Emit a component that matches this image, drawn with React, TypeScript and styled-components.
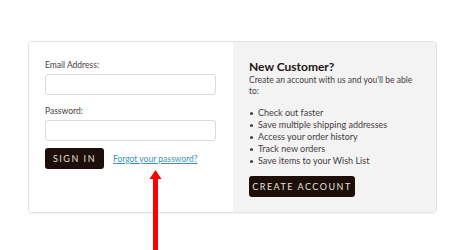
import React from 'react'
import styled, { createGlobalStyle } from 'styled-components'

const Global = createGlobalStyle`
  html, body {
    margin: 0;
    background: #fff;
    font-family: Lato, "Liberation Sans", sans-serif;
    color: #463c40;
  }
`

const Page = styled.div`
  position: relative;
  height: 250px;
  padding: 41px 0 0 28px;
  box-sizing: border-box;
  overflow: hidden;
`

const Card = styled.div`
  width: 409px;
  height: 172px;
  display: flex;
  border: 1px solid #e2e2e2;
  border-radius: 4px;
  box-sizing: border-box;
  overflow: hidden;
  box-shadow: 0 1px 2px rgba(0, 0, 0, 0.05);
`

const LoginPane = styled.div`
  width: 204px;
  flex-shrink: 0;
  box-sizing: border-box;
  background: #fff;
  padding: 17px 16px 0 16px;
  display: flex;
  flex-direction: column;
`

const Label = styled.label`
  font-size: 8.5px;
  line-height: 12px;
  margin-bottom: 3px;
`

const Input = styled.input`
  height: 21px;
  width: 171px;
  border: 1px solid #dadada;
  border-radius: 3px;
  box-sizing: border-box;
  margin-bottom: ${(p: { last?: boolean }) => (p.last ? '7px' : '10px')};
`

const ActionRow = styled.div`
  display: flex;
  align-items: center;
  gap: 9px;
`

const DarkButton = styled.button`
  height: 21px;
  width: ${(p: { w: number }) => p.w}px;
  background: #1d0e09;
  color: #e6e1de;
  border: none;
  border-radius: 3px;
  font-family: Lato, "Liberation Sans", sans-serif;
  font-size: 9px;
  font-weight: 400;
  letter-spacing: 1.5px;
  padding: 0;
`

const Link = styled.a`
  font-size: 8.5px;
  color: #3a93b8;
  text-decoration: underline;
`

const InfoPane = styled.div`
  flex: 1;
  min-width: 0;
  background: #f3f3f3;
  padding: 18px 16px 0 16px;
  display: flex;
  flex-direction: column;
  align-items: flex-start;
`

const Title = styled.div`
  font-size: 12px;
  font-weight: 700;
  line-height: 14px;
  color: #1f1416;
`

const Para = styled.p`
  margin: 1px 0 10px;
  font-size: 8.5px;
  line-height: 11px;
  width: 165px;
`

const List = styled.ul`
  margin: 0 0 9px;
  padding: 0;
  list-style: none;
`

const Item = styled.li`
  font-size: 9px;
  line-height: 12px;
  display: flex;
  align-items: center;
  &::before {
    content: '';
    width: 3px;
    height: 3px;
    border-radius: 50%;
    background: #463c40;
    margin: 0 5px 0 1px;
  }
`

const Arrow = styled.svg`
  position: absolute;
  left: 149px;
  top: 170px;
`

export default function App() {
  return (
    <Page>
      <Global />
      <Card>
        <LoginPane>
          <Label>Email Address:</Label>
          <Input />
          <Label>Password:</Label>
          <Input type="password" last />
          <ActionRow>
            <DarkButton w={59}>SIGN IN</DarkButton>
            <Link href="#">Forgot your password?</Link>
          </ActionRow>
        </LoginPane>
        <InfoPane>
          <Title>New Customer?</Title>
          <Para>Create an account with us and you'll be able to:</Para>
          <List>
            <Item>Check out faster</Item>
            <Item>Save multiple shipping addresses</Item>
            <Item>Access your order history</Item>
            <Item>Track new orders</Item>
            <Item>Save items to your Wish List</Item>
          </List>
          <DarkButton w={106}>CREATE ACCOUNT</DarkButton>
        </InfoPane>
      </Card>
      <Arrow width="13" height="80" viewBox="0 0 13 80">
        <polygon points="6.5,0 12.5,9 9,9 9,80 4,80 4,9 0.5,9" fill="#ff0000" />
      </Arrow>
    </Page>
  )
}
